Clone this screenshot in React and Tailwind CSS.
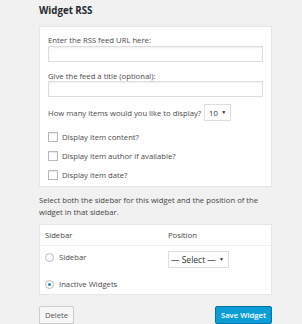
import React from "react";

const Check = ({ label }) => (
  <label className="flex items-center gap-[4px] h-[19px]">
    <span className="w-[10px] h-[10px] border border-[#b4b9be] bg-white shadow-[inset_0_1px_1px_rgba(0,0,0,0.08)]" />
    <span>{label}</span>
  </label>
);

const Radio = ({ label, checked }) => (
  <label className="flex items-center gap-[5px] h-[10px]">
    <span className="w-[9px] h-[9px] rounded-full border border-[#b4b9be] bg-white flex items-center justify-center">
      {checked && <span className="w-[3px] h-[3px] rounded-full bg-[#1e8cbe]" />}
    </span>
    <span>{label}</span>
  </label>
);

const Caret = () => <span className="text-[5px] text-[#222] leading-none">▼</span>;

const App = () => {
  return (
    <div
      className="w-[302px] h-[324px] bg-[#f1f1f1] pl-[39px] pt-[4px] text-[7.7px] leading-[10px] text-[#4a4a4a] overflow-hidden"
      style={{ fontFamily: '"Open Sans", "Liberation Sans", sans-serif' }}
    >
      <div className="text-[9.7px] font-bold text-[#23282d] leading-[14px] h-[22px]">Widget RSS</div>

      {/* feed settings */}
      <div className="w-[233px] h-[161px] bg-white border border-[#e6e6e6] px-[8px] pt-[8px]">
        <div className="h-[10px]">Enter the RSS feed URL here:</div>
        <div className="mt-[1px] h-[16px] w-[215px] border border-[#dddddd] shadow-[inset_0_1px_2px_rgba(0,0,0,0.07)]" />
        <div className="mt-[9px] h-[10px]">Give the feed a title (optional):</div>
        <div className="mt-[0px] h-[16px] w-[215px] border border-[#dddddd] shadow-[inset_0_1px_2px_rgba(0,0,0,0.07)]" />
        <div className="mt-[7px] h-[17px] flex items-center gap-[3px]">
          <span>How many items would you like to display?</span>
          <span className="h-[17px] w-[27px] border border-[#dddddd] flex items-center justify-between pl-[4px] pr-[4px] text-[#333]">
            10 <Caret />
          </span>
        </div>
        <div className="mt-[6px]">
          <Check label="Display item content?" />
          <Check label="Display item author if available?" />
          <Check label="Display item date?" />
        </div>
      </div>

      <p className="mt-[7px] leading-[12px] w-[233px] text-[#444]">
        Select both the sidebar for this widget and the position of the widget in that sidebar.
      </p>

      {/* sidebar / position */}
      <div className="mt-[6px] w-[233px] h-[71px] bg-white border border-[#e6e6e6]">
        <div className="grid grid-cols-[123px_1fr] px-[5px] h-[21px] items-center border-b border-[#eeeeee] text-[#444]">
          <span>Sidebar</span>
          <span>Position</span>
        </div>
        <div className="grid grid-cols-[123px_1fr] px-[5px] pt-[5px]">
          <div className="flex flex-col gap-[17px] pt-[1px]">
            <Radio label="Sidebar" />
            <Radio label="Inactive Widgets" checked />
          </div>
          <div>
            <span className="h-[17px] w-[61px] border border-[#dddddd] flex items-center justify-between pl-[2px] pr-[4px] text-[#333] text-[8.5px]">
              — Select — <Caret />
            </span>
          </div>
        </div>
      </div>

      <div className="mt-[11px] w-[233px] flex justify-between">
        <button className="h-[18px] w-[35px] border border-[#cccccc] bg-[#f7f7f7] text-[#555] rounded-[2px] shadow-[0_1px_0_#cccccc]">
          Delete
        </button>
        <button className="h-[18px] w-[57px] border border-[#0073aa] bg-[#0b9dd6] text-white font-semibold rounded-[2px]">
          Save Widget
        </button>
      </div>
    </div>
  );
};

export default App;
